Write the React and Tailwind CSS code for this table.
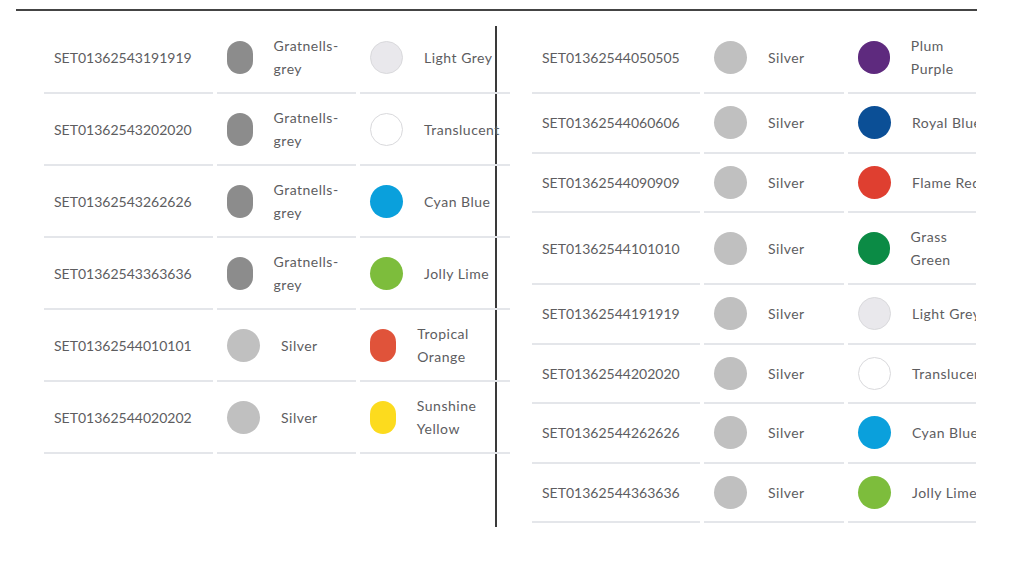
import React from "react";

const SWATCH = {
  "Gratnells-grey": "bg-[#8c8c8c]",
  Silver: "bg-[#c0c0c0]",
  "Light Grey": "bg-[#e9e8ec] border border-[#d9d9dc]",
  Translucent: "bg-white border border-[#d9d9dc]",
  "Cyan Blue": "bg-[#0aa0dc]",
  "Jolly Lime": "bg-[#7dbd3c]",
  "Tropical Orange": "bg-[#e0533a]",
  "Sunshine Yellow": "bg-[#fcdb1e]",
  "Plum Purple": "bg-[#5e2a7e]",
  "Royal Blue": "bg-[#0b4f96]",
  "Flame Red": "bg-[#df3f30]",
  "Grass Green": "bg-[#0b8b45]",
};

const leftRows = [
  ["SET01362543191919", "Gratnells-grey", "Light Grey"],
  ["SET01362543202020", "Gratnells-grey", "Translucent"],
  ["SET01362543262626", "Gratnells-grey", "Cyan Blue"],
  ["SET01362543363636", "Gratnells-grey", "Jolly Lime"],
  ["SET01362544010101", "Silver", "Tropical Orange"],
  ["SET01362544020202", "Silver", "Sunshine Yellow"],
];

const rightRows = [
  ["SET01362544050505", "Silver", "Plum Purple"],
  ["SET01362544060606", "Silver", "Royal Blue"],
  ["SET01362544090909", "Silver", "Flame Red"],
  ["SET01362544101010", "Silver", "Grass Green"],
  ["SET01362544191919", "Silver", "Light Grey"],
  ["SET01362544202020", "Silver", "Translucent"],
  ["SET01362544262626", "Silver", "Cyan Blue"],
  ["SET01362544363636", "Silver", "Jolly Lime"],
];

const cell = "min-h-[59.5px] border-b-2 border-[#e4e6ea] px-[10px] py-3 flex items-center";

const ColourCell = ({ name }) => (
  <div className={`${cell} gap-[21px]`}>
    <span className={`w-[33px] h-[33px] rounded-full ${SWATCH[name]}`} />
    <span className="tracking-[0.5px]">{name}</span>
  </div>
);

const SetTable = ({ rows, cols }) => (
  <div className={`grid ${cols} gap-x-1`}>
    {rows.map(([code, frame, tray]) => (
      <React.Fragment key={code}>
        <div className={cell}>{code}</div>
        <ColourCell name={frame} />
        <ColourCell name={tray} />
      </React.Fragment>
    ))}
  </div>
);

export default function App() {
  return (
    <div className="w-[1024px] h-[578px] bg-white overflow-hidden text-[14px] leading-[23px] text-[#5d5d5f] font-['Lato',sans-serif]">
      <div className="ml-4 mt-[9px] w-[961px] h-[2px] bg-[#444]" />

      <div className="flex items-start ml-[44px] mt-[15px]">
        {/* left column, divider drawn under the overflowing table */}
        <div className="w-[453px] self-stretch border-r-2 border-[#3a3a3a]">
          <div className="w-[466px] -mt-1">
            <SetTable rows={leftRows} cols="grid-cols-[169px_139px_150px]" />
          </div>
        </div>

        {/* right column, clipped at the page edge */}
        <div className="ml-[35px] w-[444px] overflow-hidden -mt-1 pb-[4px]">
          <div className="w-[466px]">
            <SetTable rows={rightRows} cols="grid-cols-[168px_140px_150px]" />
          </div>
        </div>
      </div>
    </div>
  );
}
